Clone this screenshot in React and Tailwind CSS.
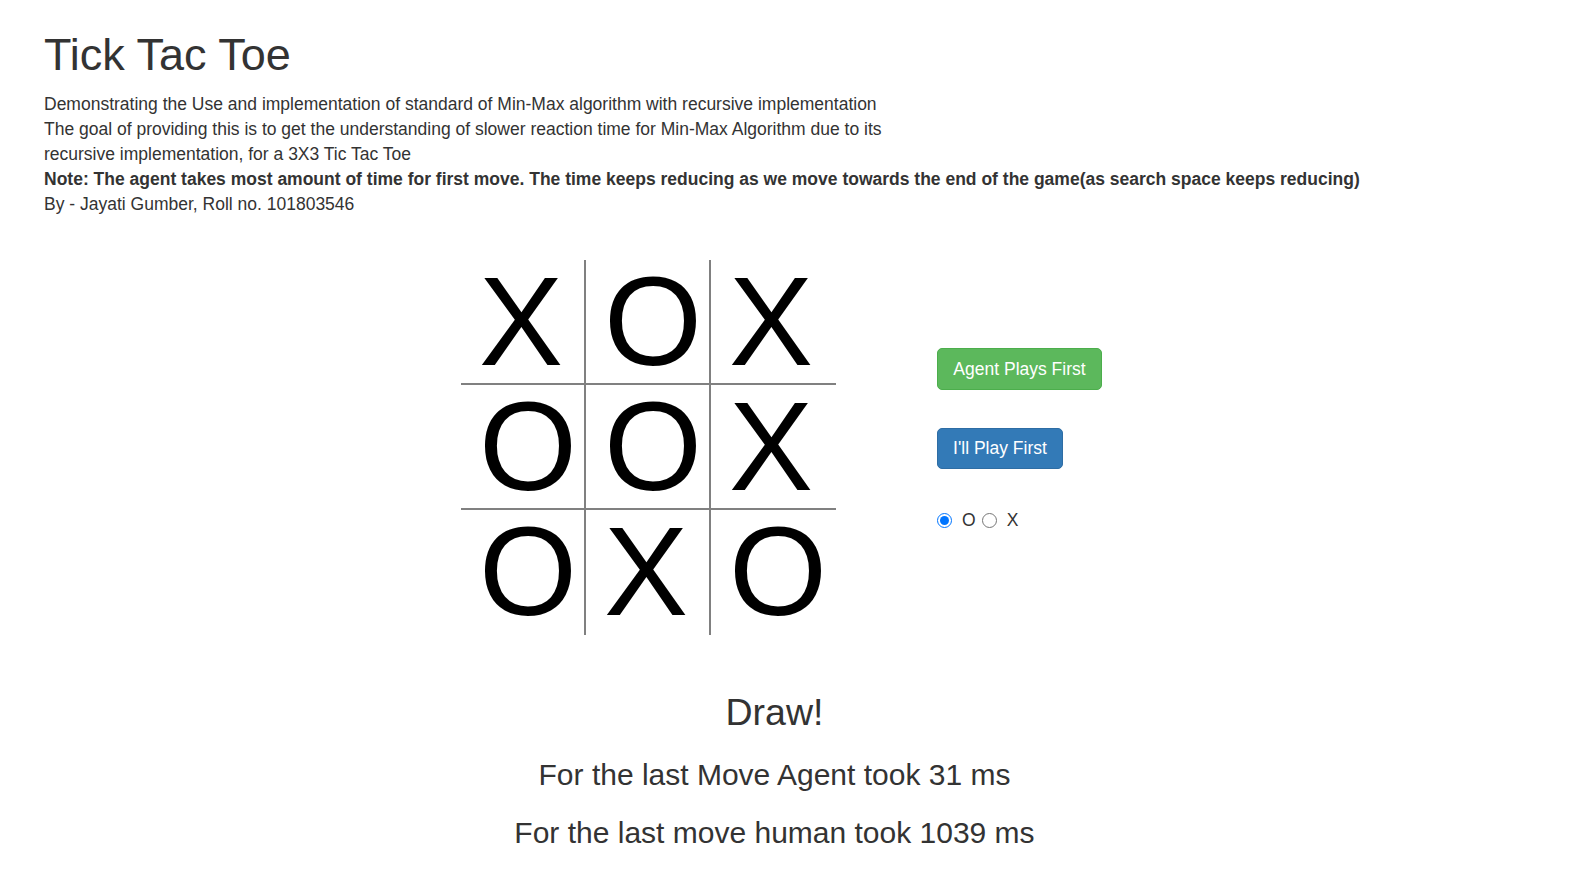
import React from "react";

const board = [
  ["X", "O", "X"],
  ["O", "O", "X"],
  ["O", "X", "O"],
];

const cellClasses = [
  [
    "border-r-2 border-b-2",
    "border-r-2 border-b-2",
    "border-b-2",
  ],
  [
    "border-r-2 border-b-2",
    "border-r-2 border-b-2",
    "border-b-2",
  ],
  ["border-r-2", "border-r-2", ""],
];

export default function App() {
  return (
    <div className="min-h-[877px] bg-white font-['Liberation_Sans',Arial,sans-serif] text-[#333] pl-[44px] pt-[30px]">
      <h1 className="text-[45px] leading-[49.5px] font-normal">Tick Tac Toe</h1>
      <div className="mt-[12.5px] text-[17.5px] leading-[25px]">
        <div className="whitespace-nowrap">
          Demonstrating the Use and implementation of standard of Min-Max algorithm with recursive implementation
        </div>
        <div className="whitespace-nowrap">
          The goal of providing this is to get the understanding of slower reaction time for Min-Max Algorithm due to its
          <br />
          recursive implementation, for a 3X3 Tic Tac Toe
        </div>
        <div className="whitespace-nowrap font-bold">
          Note: The agent takes most amount of time for first move. The time keeps reducing as we move towards the end of the game(as search space keeps reducing)
        </div>
        <div className="whitespace-nowrap">By - Jayati Gumber, Roll no. 101803546</div>
      </div>

      <div className="mt-[43px] flex">
        <div className="ml-[417px] grid grid-cols-[125px_125px_125px] grid-rows-[125px_125px_125px]">
          {board.map((row, r) =>
            row.map((v, c) => (
              <div
                key={`${r}-${c}`}
                className={`border-[#808080] pl-[18px] pt-[1px] text-[126px] leading-[122px] text-black ${cellClasses[r][c]}`}
              >
                {v}
              </div>
            ))
          )}
        </div>

        <div className="ml-[101px] pt-[88px] flex flex-col items-start text-[17.5px]">
          <button className="w-[165px] h-[42px] rounded-[5px] border border-[#4cae4c] bg-[#5cb85c] text-white text-[17.5px] leading-[25px]">
            Agent Plays First
          </button>
          <button className="mt-[38px] w-[126px] h-[41px] rounded-[5px] border border-[#2e6da4] bg-[#337ab7] text-white text-[17.5px] leading-[25px]">
            I'll Play First
          </button>
          <div className="mt-[39px] flex items-center leading-[25px]">
            <input type="radio" name="sym" defaultChecked className="m-0 w-[15px] h-[15px]" />
            <span className="ml-[10px]">O</span>
            <input type="radio" name="sym" className="m-0 ml-[6px] w-[15px] h-[15px]" />
            <span className="ml-[10px]">X</span>
          </div>
        </div>
      </div>

      <div className="w-[1461px] text-center">
        <div className="mt-[56px] text-[37.5px] leading-[42px]">Draw!</div>
        <div className="mt-[25px] text-[30px] leading-[33px]">For the last Move Agent took 31 ms</div>
        <div className="mt-[25px] text-[30px] leading-[33px]">For the last move human took 1039 ms</div>
      </div>
    </div>
  );
}
